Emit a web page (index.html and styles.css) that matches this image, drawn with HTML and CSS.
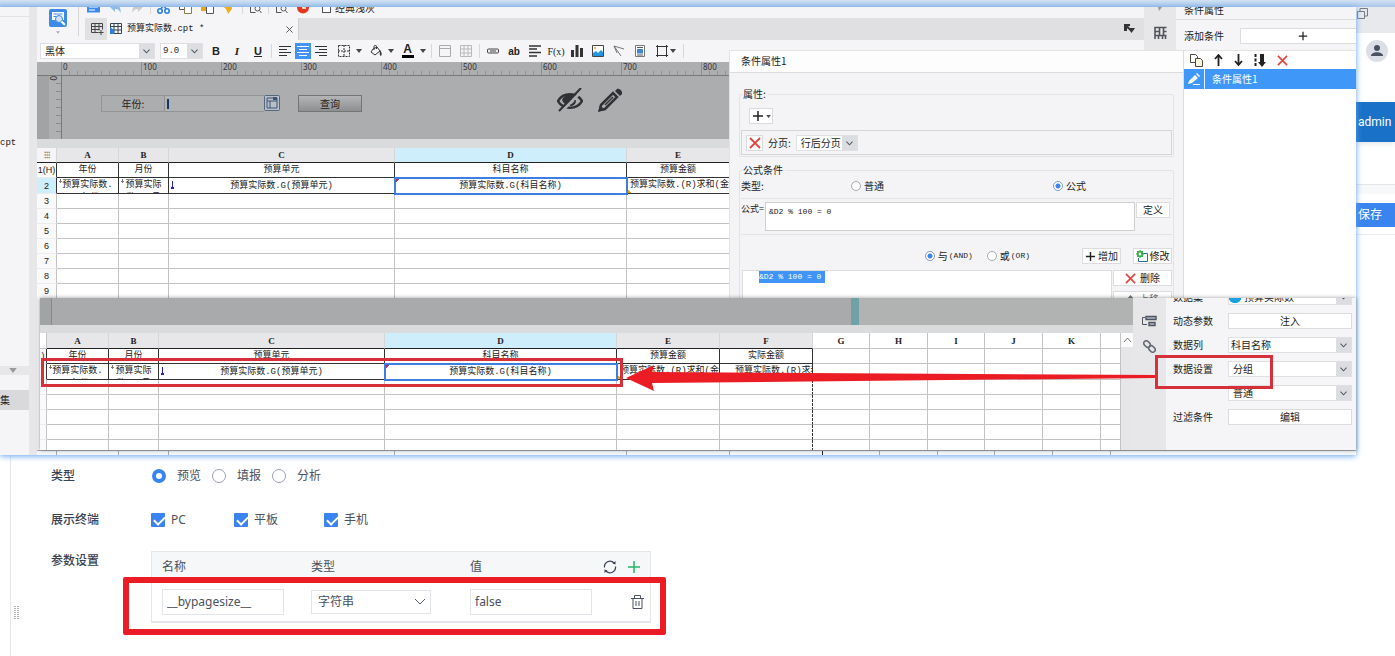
FILE: index.html
```html
<!DOCTYPE html>
<html lang="zh-CN">
<head>
<meta charset="utf-8">
<title>预算实际数.cpt</title>
<link rel="stylesheet" href="styles.css">
</head>
<body>
<svg class="sprite" aria-hidden="true">
	<symbol id="chev" viewBox="0 0 16 16"><path d="M4.500 6.500L8 10l3.500-3.500" fill="none" stroke="#55585e" stroke-width="1.200"/></symbol>
	<symbol id="cross" viewBox="0 0 12 12"><path d="M1 1l10 10M11 1L1 11" fill="none" stroke="#e2453f" stroke-width="1.800"/></symbol>
	<symbol id="plus" viewBox="0 0 12 12"><path d="M6 1v10M1 6h10" fill="none" stroke="#222" stroke-width="1.500"/></symbol>
	<symbol id="tri" viewBox="0 0 6 4"><path d="M0 0h6L3 4z" fill="#444"/></symbol>
</svg>
<div class="page">
	<div class="top">
		<div class="shot">
			<div class="tree">
				<div class="tree-top"></div>
				<div class="tree-list">cpt</div>
				<div class="tree-fold"><svg width="8" height="5" viewBox="0 0 6 4"><path d="M0 0h6L3 4z" fill="#999"/></svg></div>
				<div class="tree-gap"></div>
				<div class="tree-item">集</div>
			</div>
			<div class="windows">
				<div class="upper">
					<div class="work">
						<div class="head">
							<div class="logo">
								<svg width="18" height="18" viewBox="0 0 18 18"><rect x="0" y="0" width="18" height="18" rx="2" fill="#3d8ae8"/><path d="M3 3h12v8H3z" fill="#fff"/><path d="M4.500 5h9M4.500 7.500h3" stroke="#3d8ae8"/><circle cx="10" cy="10" r="3.500" fill="#cfe3fb" stroke="#3d8ae8"/><path d="M12.500 12.500l3.500 3.500" stroke="#fff" stroke-width="2"/></svg>
								<svg width="4" height="3" viewBox="0 0 6 4"><path d="M0 0h6L3 4z" fill="#aaa"/></svg>
							</div>
							<div class="head-main">
								<div class="quick">
									<svg class="i13" viewBox="0 0 13 13"><path d="M0 0h13v11.500H0z" fill="#3d8ae8"/><path d="M2 6h9M2 9h6" stroke="#fff"/></svg>
									<svg class="i13" viewBox="0 0 13 13"><path d="M1 6l5-5v3c5 0 6 4 5.500 8C10 8.500 9 8 6 8v3z" fill="#8fb9ea"/></svg>
									<svg class="i13" viewBox="0 0 13 13"><path d="M12 6L7 1v3C2 4 1 8 1.500 12 3 8.500 4 8 7 8v3z" fill="#c9cbcf"/></svg>
									<i class="sep"></i>
									<svg class="i13" viewBox="0 0 13 13" fill="none" stroke="#2f7de0" stroke-width="1.600"><circle cx="3" cy="10" r="2.200"/><circle cx="10" cy="10" r="2.200"/><path d="M4 8l5-8M9 8L4 0"/></svg>
									<svg class="i13" viewBox="0 0 13 13" fill="#fff" stroke="#555"><path d="M.5.5h7v8h-7z"/><path d="M5.500 4.500h7v8h-7z" stroke="#8c7a4d"/></svg>
									<svg class="i13" viewBox="0 0 13 13"><path d="M0 0h9v10H0z" fill="#e8a51c"/><path d="M5.500 4.500h7v8h-7z" fill="#fff" stroke="#555"/></svg>
									<svg class="i13" viewBox="0 0 13 13"><path d="M0 3l8-3 1 8-4 5c-1-4-3-7-5-7z" fill="#eeac20"/></svg>
									<i class="sep"></i>
									<svg class="i13" viewBox="0 0 13 13" fill="none" stroke="#555"><path d="M1.500 0v11.500h5M9.500 0v3"/><circle cx="8.500" cy="7.500" r="2.500"/><path d="M10.500 9.500l2 2.500"/></svg>
									<i class="sep"></i>
									<svg class="i13" viewBox="0 0 13 13" fill="none" stroke="#555"><path d="M1.500 0v11.500h5M9.500 0v3"/><circle cx="8.500" cy="7.500" r="2.500"/><path d="M10.500 9.500l2 2.500"/></svg>
									<svg class="i13" viewBox="0 0 13 13"><circle cx="6" cy="6.500" r="6" fill="#e03a20"/><path d="M6 3v4h3" fill="none" stroke="#fff" stroke-width="1.500"/></svg>
									<label class="classic"><input type="checkbox">经典浅灰</label>
								</div>
								<div class="tabs">
									<button class="new-tab" aria-label="新建"><svg width="13" height="12" viewBox="0 0 13 12"><path d="M.5.5h11v6M.5.5v9h7M.5 3.500h11M.5 6.500h8M4 .5v9M8 .5v7" fill="none" stroke="#444"/><path d="M10 7v5M7.500 9.500h5" stroke="#444"/></svg></button>
									<div class="tab">
										<svg width="12" height="12" viewBox="0 0 12 12"><path d="M.5.5h11v10H.5zM.5 3.500h11M.5 7h11M4 .5v10M8 .5v10" fill="none" stroke="#345"/><path d="M0 4l4 3v4H0z" fill="#2f7de0"/></svg>
										<span>预算实际数.cpt *</span>
										<button aria-label="关闭"><svg width="7" height="7" viewBox="0 0 8 8"><path d="M.5.5l7 7M7.500.5l-7 7" stroke="#444"/></svg></button>
									</div>
								</div>
							</div>
						</div>
						<div class="format">
							<span class="combo font-name"><select aria-label="字体"><option>黑体</option></select><svg><use href="#chev"/></svg></span>
							<span class="combo font-size"><select aria-label="字号"><option>9.0</option></select><svg><use href="#chev"/></svg></span>
							<button class="b">B</button>
							<button class="i">I</button>
							<button class="u">U</button>
							<i class="sep"></i>
							<div class="aligns">
								<button aria-label="左对齐"><svg class="i12" viewBox="0 0 12 12"><path d="M0 1.500h12M0 4.500h8M0 7.500h12M0 10.500h8" stroke="#333" stroke-width="1.200"/></svg></button>
								<button class="on" aria-label="居中"><svg class="i12" viewBox="0 0 12 12"><path d="M0 1.500h12M2 4.500h8M0 7.500h12M2 10.500h8" stroke="#fff" stroke-width="1.200"/></svg></button>
								<button aria-label="右对齐"><svg class="i12" viewBox="0 0 12 12"><path d="M0 1.500h12M4 4.500h8M0 7.500h12M4 10.500h8" stroke="#333" stroke-width="1.200"/></svg></button>
							</div>
							<div class="drops">
								<button aria-label="边框"><svg class="i12" viewBox="0 0 12 12"><path d="M.5.5h11v11H.5zM6 0v12M0 6h12" fill="none" stroke="#333" stroke-dasharray="2 1"/></svg><svg class="car"><use href="#tri"/></svg></button>
								<button aria-label="填充"><svg class="i12" viewBox="0 0 12 12"><path d="M3 4l4-2 3 4-5 4-4-3zM4 5V1.500C4 0 6.500 0 6.500 1.500V4" fill="none" stroke="#333"/><path d="M10 5c2 2 2 5 1 6-2-1-1-3-1-6z" fill="#333"/></svg><svg class="car"><use href="#tri"/></svg></button>
								<button class="color"><span>A</span><svg class="car"><use href="#tri"/></svg></button>
							</div>
							<i class="sep"></i>
							<button aria-label="合并"><svg class="i12" viewBox="0 0 12 12"><path d="M.5.5h11v11H.5zM0 3.500h12" fill="none" stroke="#aaa"/></svg></button>
							<button aria-label="拆分"><svg class="i12 pale" viewBox="0 0 12 12"><path d="M.5.5h11v11H.5zM.5 4h11M.5 8h11M4 .5v11M8 .5v11" fill="none" stroke="#aaa"/></svg></button>
							<i class="sep"></i>
							<button aria-label="控件"><svg class="i12" viewBox="0 0 12 12"><rect x=".5" y="4" width="11" height="4" rx="1" fill="#eee" stroke="#444"/><path d="M3 6h6" stroke="#444"/></svg></button>
							<button class="ab">ab</button>
							<button aria-label="富文本"><svg class="i12" viewBox="0 0 12 12"><path d="M0 1h12M0 4h8M0 7.500h12M0 11h8" stroke="#333" stroke-width="1.500"/></svg></button>
							<button class="fx">F(x)</button>
							<button aria-label="图表"><svg class="i12" viewBox="0 0 12 12"><path d="M0 5h3v7H0zM4.500 0h3v12h-3zM9 3h3v9H9z" fill="#333"/></svg></button>
							<button aria-label="图片"><svg class="i12" viewBox="0 0 12 12"><path d="M.5.5h11v11H.5z" fill="#fff" stroke="#444"/><path d="M1 11V8l3-2 2 2 3-3 2 2v4z" fill="#2497e3"/><circle cx="3" cy="3" r="1" fill="#f0a020"/></svg></button>
							<button aria-label="斜线"><svg class="i12" viewBox="0 0 12 12"><path d="M1 1l10 3M1 1l7 10M1 1l3 7" fill="none" stroke="#777"/></svg></button>
							<button aria-label="子报表"><svg class="i12" viewBox="0 0 12 12"><path d="M1.500.5h9v11h-9z" fill="#fff" stroke="#777"/><path d="M3 2.500h6M3 10h6" stroke="#555"/><path d="M3 4h6v4.500H3z" fill="#3f86cf"/></svg></button>
							<button class="box-drop" aria-label="框"><svg class="i12" viewBox="0 0 12 12"><path d="M1.500 0v12M10.500 0v12M0 1.500h12M0 10.500h12" stroke="#333"/></svg><svg class="car"><use href="#tri"/></svg></button>
							<i class="sep"></i>
						</div>
						<div class="ruler"><span>0</span><span>100</span><span>200</span><span>300</span><span>400</span><span>500</span><span>600</span><span>700</span><span>800</span></div>
						<div class="param">
							<div class="side-rule"><span>0</span></div>
							<div class="param-body">
								<div class="param-field">
									<label for="year">年份:</label>
									<input id="year" type="text">
									<svg width="16" height="16" viewBox="0 0 16 16"><rect x=".5" y=".5" width="15" height="15" rx="1" fill="#b9bfc8" stroke="#55677e"/><path d="M3 3h10v10H3zM3 6h10M6 6v7" fill="none" stroke="#3d5472"/><path d="M9 2h4v3H9z" fill="#3d5472"/></svg>
								</div>
								<button class="query">查询</button>
								<svg class="eye" width="26" height="24" viewBox="0 0 26 24"><path d="M1 13C6 4 20 4 25 13 20 22 6 22 1 13z" fill="none" stroke="#2f3134" stroke-width="2.500"/><path d="M5 12C8 5 16 5 18 8l-8 9c-3-1-4-3-5-5z" fill="#2f3134"/><path d="M13 17c3 0 5-2 5-5" fill="none" stroke="#2f3134" stroke-width="2"/><path d="M4 24L26 2" stroke="#acadaf" stroke-width="3"/><path d="M2 23L24 0" stroke="#2f3134" stroke-width="2"/></svg>
								<svg class="pencil" width="25" height="24" viewBox="0 0 25 24"><path d="M3 17L15 5l4 4L7 21l-5 1z" fill="none" stroke="#2f3134" stroke-width="2.500"/><path d="M17 3l2-2c2-1 6 2 5 5l-2 2zM0 24l2-7 5 5z" fill="#2f3134"/><path d="M7 17L15 9" stroke="#2f3134" stroke-width="1.500"/></svg>
							</div>
						</div>
						<div class="splitter"></div>
						<table class="sheet">
							<colgroup><col class="w20"><col class="w62"><col class="w50"><col class="w226"><col class="w232"><col class="w103"></colgroup>
							<thead>
								<tr><th class="corner">⁝⁝⁝</th><th>A</th><th>B</th><th>C</th><th class="sel">D</th><th>E</th></tr>
							</thead>
							<tbody>
								<tr class="dark"><th>1(H)</th><td>年份</td><td>月份</td><td>预算单元</td><td>科目名称</td><td>预算金额</td></tr>
								<tr class="dark bound"><th class="sel">2</th><td class="down"><div>预算实际数.G(年份)</div></td><td class="down"><div>预算实际数.G(月份)</div></td><td class="down blue">预算实际数.G(预算单元)</td><td class="picked">预算实际数.G(科目名称)</td><td class="cut">预算实际数.(R)求和(金额)</td></tr>
								<tr><th>3</th><td></td><td></td><td></td><td></td><td></td></tr>
								<tr><th>4</th><td></td><td></td><td></td><td></td><td></td></tr>
								<tr><th>5</th><td></td><td></td><td></td><td></td><td></td></tr>
								<tr><th>6</th><td></td><td></td><td></td><td></td><td></td></tr>
								<tr><th>7</th><td></td><td></td><td></td><td></td><td></td></tr>
								<tr><th>8</th><td></td><td></td><td></td><td></td><td></td></tr>
								<tr><th>9</th><td></td><td></td><td></td><td></td><td></td></tr>
							</tbody>
						</table>
					</div>
					<div class="right">
						<div class="right-head">
							<div class="bars">
								<div class="bar1"></div>
								<div class="bar2"><svg width="11" height="10" viewBox="0 0 11 10"><path d="M0 0h6v2L3 3v4H0z" fill="#333"/><path d="M4 4h7L7.500 9z" fill="#333"/><path d="M3 3l4 3" stroke="#333" stroke-width="2"/></svg></div>
							</div>
							<div class="strip"><svg width="4" height="4" viewBox="0 0 4 4"><path d="M0 0h4L1 4z" fill="#999"/></svg><svg width="14" height="14" viewBox="0 0 14 14"><path d="M2 13V1.500h11.500M2 9.500h11.500M5.500 9v4M9.500 9v4M2 5.500h4M6.500 1v8M12.500 9v4M10 5.500h3.500M10.500 1v8" fill="none" stroke="#50545c" stroke-width="1.600"/></svg></div>
							<div class="cond-head">
								<div class="cond-title">条件属性</div>
								<div class="cond-add"><span>添加条件</span><button aria-label="添加"><svg width="10" height="10"><use href="#plus"/></svg></button></div>
							</div>
						</div>
						<div class="right-body">
							<div class="dialog">
								<div class="dialog-title">条件属性1</div>
								<div class="dialog-body">
									<fieldset>
										<legend>属性:</legend>
										<button class="add-attr" aria-label="添加属性"><svg width="12" height="12"><use href="#plus"/></svg><svg width="5" height="3"><use href="#tri"/></svg></button>
										<div class="attr-row">
											<button class="btn sq" aria-label="删除"><svg width="12" height="12"><use href="#cross"/></svg></button>
											<label for="paging">分页:</label>
											<span class="combo paging"><select id="paging"><option>行后分页</option></select><svg><use href="#chev"/></svg></span>
										</div>
									</fieldset>
									<fieldset>
										<legend>公式条件</legend>
										<div class="type-row">
											<span>类型:</span>
											<label><input type="radio" name="kind">普通</label>
											<label><input type="radio" name="kind" checked>公式</label>
										</div>
										<div class="formula-row">
											<label for="formula">公式=</label>
											<textarea id="formula">&amp;D2 % 100 = 0</textarea>
											<button class="btn define">定义</button>
										</div>
										<div class="join-row">
											<label><input type="radio" name="join" checked>与<small>(AND)</small></label>
											<label><input type="radio" name="join">或<small>(OR)</small></label>
											<button class="btn"><svg width="11" height="11"><use href="#plus"/></svg>增加</button>
											<button class="btn"><svg width="12" height="12" viewBox="0 0 12 12"><path d="M5 3.500h6.500v8h-9V8" fill="#fff" stroke="#2a6f9e"/><circle cx="4" cy="4" r="2.500" fill="none" stroke="#31b04a" stroke-width="1.500"/><path d="M4 0v8M0 4h8M1 1l6 6M7 1L1 7" stroke="#31b04a"/><circle cx="4" cy="4" r="1.200" fill="#fff"/></svg>修改</button>
										</div>
										<div class="result">
											<div class="result-list"><mark>&amp;D2 % 100 = 0</mark></div>
											<div class="result-ops">
												<button class="btn"><svg width="11" height="11"><use href="#cross"/></svg>删除</button>
												<button class="btn dim"><svg width="9" height="9" viewBox="0 0 9 9"><path d="M4.500 0L9 5H6v4H3V5H0z" fill="#777"/></svg>上移</button>
											</div>
										</div>
									</fieldset>
								</div>
							</div>
							<div class="cond-list">
								<div class="cond-tools">
									<svg width="13" height="13" viewBox="0 0 13 13" fill="#fff" stroke="#4d4a3c"><path d="M.5.5h5l2 2v6h-7z"/><path d="M5.500 4.500h5l2 2v6h-7z" fill="#fbf6df"/></svg>
									<svg width="9" height="12" viewBox="0 0 9 12"><path d="M4.500 12V2M1 5l3.500-4L8 5" fill="none" stroke="#222" stroke-width="1.800"/></svg>
									<svg width="9" height="12" viewBox="0 0 9 12"><path d="M4.500 0v10M1 7l3.500 4L8 7" fill="none" stroke="#222" stroke-width="1.800"/></svg>
									<svg width="12" height="13" viewBox="0 0 12 13"><path d="M6 0h4v8h2l-4 5-4-5h2z" fill="#222"/><path d="M1.500 0v12" stroke="#222" stroke-width="2" stroke-dasharray="3 1.500"/></svg>
									<svg width="11" height="11"><use href="#cross"/></svg>
								</div>
								<div class="cond-item"><span class="pen"><svg width="12" height="12" viewBox="0 0 12 12"><path d="M1 8l6-6 3 3-6 5-4 1zM8 1l1-1 3 3-1 1z" fill="#fff"/><path d="M5 11.500h7" stroke="#fff"/></svg></span><span>条件属性1</span></div>
							</div>
						</div>
					</div>
				</div>
				<div class="lower">
					<div class="lower-sheet">
						<div class="band"><i class="band-rule"></i><i class="band-left"></i><i class="band-mark"></i></div>
						<div class="splitter"></div>
						<div class="sheet-wrap">
							<table class="sheet">
								<colgroup><col class="w7"><col class="w62"><col class="w50"><col class="w226"><col class="w232"><col class="w103"><col class="w93"><col class="w57"><col class="w58"><col class="w57"><col class="w58"><col class="w58"><col class="w20"></colgroup>
								<thead>
									<tr><th class="off"></th><th>A</th><th>B</th><th>C</th><th class="sel">D</th><th>E</th><th>F</th><th class="off">G</th><th class="off">H</th><th class="off">I</th><th class="off">J</th><th class="off">K</th><th class="off"></th></tr>
								</thead>
								<tbody>
									<tr class="dark"><th>)</th><td>年份</td><td>月份</td><td>预算单元</td><td>科目名称</td><td>预算金额</td><td>实际金额</td><td></td><td></td><td></td><td></td><td></td><td></td></tr>
									<tr class="dark bound"><th></th><td class="down"><div>预算实际数.G(年份)</div></td><td class="down"><div>预算实际数.G(月份)</div></td><td class="down blue">预算实际数.G(预算单元)</td><td class="picked">预算实际数.G(科目名称)</td><td class="cut">预算实际数.(R)求和(金额)</td><td class="cut far">预算实际数.(R)求和(金额)</td><td></td><td></td><td></td><td></td><td></td><td></td></tr>
									<tr><th></th><td></td><td></td><td></td><td></td><td></td><td></td><td></td><td></td><td></td><td></td><td></td><td></td></tr>
									<tr><th></th><td></td><td></td><td></td><td></td><td></td><td></td><td></td><td></td><td></td><td></td><td></td><td></td></tr>
									<tr><th></th><td></td><td></td><td></td><td></td><td></td><td></td><td></td><td></td><td></td><td></td><td></td><td></td></tr>
									<tr><th></th><td></td><td></td><td></td><td></td><td></td><td></td><td></td><td></td><td></td><td></td><td></td><td></td></tr>
									<tr><th></th><td></td><td></td><td></td><td></td><td></td><td></td><td></td><td></td><td></td><td></td><td></td><td></td></tr>
								</tbody>
							</table>
							<div class="scroll"><svg width="9" height="6" viewBox="0 0 9 6"><path d="M1 5l3.500-4L8 5" fill="none" stroke="#777"/></svg></div>
						</div>
					</div>
					<div class="side-icons">
						<svg width="15" height="12" viewBox="0 0 15 12"><path d="M4 1.500h10v3H4zM7 7.500h6v3H7z" fill="#a9b7cc" stroke="#50545c" stroke-width="1.400"/><path d="M3 2.500H.5v7H5" fill="none" stroke="#50545c"/></svg>
						<svg width="13" height="13" viewBox="0 0 13 13" fill="none" stroke="#666b73" stroke-width="1.600"><rect x="-3.500" y="-2.500" width="7" height="5" rx="2.500" transform="translate(4 4) rotate(45)"/><rect x="-3.500" y="-2.500" width="7" height="5" rx="2.500" transform="translate(9 9) rotate(45)"/></svg>
					</div>
					<div class="props">
						<div class="prop"><label for="dataset">数据集</label><span class="combo db"><select id="dataset"><option>预算实际数</option></select><svg><use href="#chev"/></svg></span></div>
						<div class="prop"><span>动态参数</span><button class="btn">注入</button></div>
						<div class="prop"><label for="column">数据列</label><span class="combo flush"><select id="column"><option>科目名称</option></select><svg><use href="#chev"/></svg></span></div>
						<div class="prop"><label for="setting">数据设置</label><span class="combo"><select id="setting"><option>分组</option></select><svg><use href="#chev"/></svg></span></div>
						<div class="prop"><span></span><span class="combo"><select aria-label="分组方式"><option>普通</option></select><svg><use href="#chev"/></svg></span></div>
						<div class="prop"><span>过滤条件</span><button class="btn">编辑</button></div>
					</div>
					<div class="mark-row"></div>
					<svg class="arrow" viewBox="0 0 530 26" preserveAspectRatio="none"><path d="M0 13L28 0 26 7 530 10v3L26 18l2 8z" fill="#ec1c24"/></svg>
					<div class="mark-setting"></div>
				</div>
				<div class="ticks"><i class="w20"></i><i class="w62"></i><i class="w50"></i><i class="w226"></i><i class="w232"></i><i class="w103"></i><i class="w93 edge"></i><i class="w57"></i><i class="w58"></i><i class="w57"></i><i class="w58"></i><i class="w58"></i></div>
			</div>
		</div>
		<div class="site">
			<div class="site-bar"><svg width="11" height="11" viewBox="0 0 11 11" fill="none" stroke="#777b84"><path d="M.5 3.500h7v7h-7z"/><path d="M3 3V.5h7.500V8H8"/></svg></div>
			<div class="site-user"><svg width="22" height="22" viewBox="0 0 22 22"><circle cx="11" cy="11" r="11" fill="#dcdfe6"/><circle cx="11" cy="8" r="3" fill="#4a5262"/><path d="M5 16c0-5 12-5 12 0z" fill="#4a5262"/></svg></div>
			<div class="site-name">admin</div>
			<div class="site-blank"></div>
			<div class="site-line"></div>
			<div class="site-save"><button>保存</button></div>
		</div>
	</div>
	<div class="form">
		<div class="grip"><svg width="5" height="13" viewBox="0 0 5 13"><path d="M1 0v13M4 0v13" stroke="#666" stroke-dasharray="1 1"/></svg></div>
		<div class="fields">
			<div class="field">
				<span class="name">类型</span>
				<label class="opt"><input type="radio" name="mode" checked>预览</label>
				<label class="opt"><input type="radio" name="mode">填报</label>
				<label class="opt"><input type="radio" name="mode">分析</label>
			</div>
			<div class="field">
				<span class="name">展示终端</span>
				<label class="chk pc"><input type="checkbox" checked>PC</label>
				<label class="chk"><input type="checkbox" checked>平板</label>
				<label class="chk"><input type="checkbox" checked>手机</label>
			</div>
			<div class="field last">
				<span class="name">参数设置</span>
				<div class="params">
					<table>
						<thead>
							<tr><th class="c1">名称</th><th class="c2">类型</th><th class="c3">值</th><th class="c4"><div class="acts">
								<button aria-label="刷新"><svg width="14" height="14" viewBox="0 0 14 14"><path d="M1.500 7.500A5.500 5.500 0 0 1 11 3M12.500 6.500A5.500 5.500 0 0 1 3 11" fill="none" stroke="#3b4354" stroke-width="1.200"/><path d="M9.500 3.500L12.500 1v3.500zM4.500 10.500L1.500 13V9.500z" fill="#3b4354"/></svg></button>
								<button aria-label="新增"><svg width="12" height="12" viewBox="0 0 12 12"><path d="M6 0v12M0 6h12" stroke="#27b768" stroke-width="1.500"/></svg></button>
							</div></th></tr>
						</thead>
						<tbody>
							<tr>
								<td><input type="text" aria-label="名称" value="__bypagesize__"></td>
								<td><span class="pick"><select aria-label="类型"><option>字符串</option></select><svg width="12" height="8" viewBox="0 0 12 8"><path d="M1 1l5 5 5-5" fill="none" stroke="#555c69"/></svg></span></td>
								<td><input type="text" aria-label="值" value="false"></td>
								<td class="c4"><div class="acts del"><button aria-label="删除"><svg width="13" height="14" viewBox="0 0 13 14" fill="none" stroke="#4a5160"><path d="M0 3.500h13M3.500 3V.5h6V3M2 4v9.500h9V4M5 6v5M8 6v5"/></svg></button></div></td>
							</tr>
						</tbody>
					</table>
					<div class="mark-param"></div>
				</div>
			</div>
		</div>
	</div>
</div>
</body>
</html>
```
FILE: styles.css
```css
*{
	padding: 0;
	margin: 0;
	box-sizing: border-box;
}
body{
	background: #fff;
	color: #222;
	font: 10px/14px "Noto Sans CJK SC", sans-serif;
	overflow: hidden;
}
button,input,select,textarea{
	font: inherit;
	color: inherit;
	border: 0;
	background: none;
	outline: none;
	appearance: none;
}
svg{
	display: block;
	flex: none;
}
table{
	table-layout: fixed;
	border-spacing: 0;
}
fieldset{
	border: 1px solid #e3e3e6;
	border-radius: 2px;
	min-width: 0;
}
.sprite{
	position: absolute;
	width: 0;
	height: 0;
}
.page{
	display: flex;
	flex-direction: column;
	min-height: 100vh;
}
.top{
	display: grid;
	grid-template-columns: minmax(0, 1fr) 39px;
	padding-top: 7px;
	background: linear-gradient(#d3e2f3, #a9c5e8 7px, #fff 7px);
}
/*设计器截图*/
.shot{
	z-index: 1;
	display: flex;
	height: 448px;
	background: #f5f5f7;
	box-shadow: 0 1px 6px #5fa3ee;
}
.tree{
	display: flex;
	flex-direction: column;
	flex: 0 0 37px;
	border-right: 8px solid #e7e7ea;
	background: #f5f5f7;
}
.tree-top{
	height: 10px;
	border-bottom: 1px solid #e2e2e4;
}
.tree-list{
	height: 349px;
	padding-top: 119px;
	font-size: 9px;
	font-family: "Liberation Mono", monospace;
}
.tree-fold{
	display: flex;
	align-items: center;
	height: 9px;
	padding-left: 9px;
	background: #e7e7ea;
}
.tree-gap{
	height: 15px;
}
.tree-item{
	height: 20px;
	line-height: 20px;
	background: #d9d9dc;
}
.windows{
	flex: 1;
	min-width: 0;
}
.upper{
	display: flex;
	height: 291px;
	overflow: hidden;
}
.work{
	flex: 1;
	min-width: 0;
	overflow: hidden;
}
.head{
	display: flex;
	height: 33px;
	background: #f5f5f7;
}
.logo{
	display: flex;
	flex-direction: column;
	align-items: center;
	gap: 4px;
	width: 42px;
	margin-right: 6px;
	height: 29px;
	padding-top: 2px;
	border-right: 1px solid #d5d5d8;
}
.head-main{
	flex: 1;
	min-width: 0;
}
.quick{
	display: flex;
	align-items: flex-end;
	gap: 9px;
	height: 11px;
	padding: 0 0 4px 2px;
	overflow: hidden;
}
.sep{
	flex: none;
	width: 1px;
	height: 14px;
	background: #d8d8da;
}
.quick .sep{
	margin: 0 -3px;
}
.i13{
	width: 13px;
	height: 13px;
}
.i12{
	width: 12px;
	height: 12px;
}
.classic{
	display: flex;
	align-items: center;
	gap: 4px;
	margin-left: 3px;
	white-space: nowrap;
	line-height: 12px;
}
.classic input{
	width: 9px;
	height: 9px;
	border: 1px solid #555;
	background: #fff;
}
.tabs{
	display: flex;
	height: 22px;
	background: #e0e0e2;
}
.new-tab{
	width: 22px;
	padding-left: 6px;
}
.tab{
	display: flex;
	align-items: center;
	gap: 5px;
	width: 192px;
	padding: 0 5px 0 3px;
	font: 9px/16px "Liberation Mono", "Noto Sans CJK SC", monospace;
	background: #f5f5f7;
	border-right: 1px solid #cfcfd2;
}
.tab button{
	margin-left: auto;
}
.format{
	display: flex;
	align-items: center;
	gap: 5px;
	height: 22px;
	padding-left: 3px;
	background: #f5f5f7;
}
.format button{
	display: flex;
	align-items: center;
	justify-content: center;
	flex: none;
	width: 16px;
	height: 16px;
}
.combo{
	display: flex;
	flex: none;
	height: 16px;
	border: 1px solid #e0e0e3;
	background: #fff;
}
.combo select{
	flex: 1;
	min-width: 0;
	padding-left: 4px;
	line-height: 14px;
}
.combo svg{
	width: 15px;
	height: 14px;
	background: #dcdde0;
}
.font-name{
	width: 115px;
}
.font-size{
	width: 43px;
	font: 9px "Liberation Mono", monospace;
}
.font-size select{
	padding-left: 2px;
}
.b,.i,.u{
	font: bold 11px "Liberation Sans", sans-serif;
}
.i{
	font-style: italic;
	font-family: "Liberation Serif", serif;
}
.u{
	text-decoration: underline;
}
.aligns{
	display: flex;
	gap: 2px;
}
.aligns .on{
	background: #3f94f5;
}
.drops{
	display: flex;
	gap: 7px;
	padding-left: 3px;
}
.format .drops button,
.format .box-drop{
	width: 25px;
	gap: 6px;
}
.format .box-drop{
	gap: 2px;
}
.car{
	width: 6px;
	height: 4px;
}
.color span{
	width: 12px;
	height: 14px;
	font: bold 12px/11px "Liberation Sans", sans-serif;
	border-bottom: 3px solid #000;
}
.pale{
	opacity: .8;
}
.format .ab{
	font: bold 10px "Liberation Sans", sans-serif;
}
.format .fx{
	font: 10px "Liberation Serif", serif;
}
.ruler{
	display: flex;
	height: 14px;
	padding-left: 24px;
	overflow: hidden;
	font: 8px/10px "Noto Sans", sans-serif;
	color: #333;
	background: #adaeb0;
	border-bottom: 1px solid #77787a;
}
.ruler span{
	flex: 0 0 80px;
	padding-left: 1px;
	border-left: 1px solid #8d8e90;
	background: repeating-linear-gradient(90deg, transparent 0 7px, #939496 7px 8px) 0 100% / 100% 4px no-repeat;
}
.param{
	display: flex;
	height: 63px;
	background: #acadaf;
}
.side-rule{
	flex: 0 0 25px;
	border-right: 1px solid #77787a;
	background: repeating-linear-gradient(transparent 0 7px, #8d8e90 7px 8px) 100% 0 / 5px 100% no-repeat, linear-gradient(90deg, #a2a3a5 12px, #afb0b2 12px);
}
.side-rule span{
	display: block;
	width: 8px;
	margin-left: 12px;
	font: 8px/8px "Noto Sans", sans-serif;
	writing-mode: vertical-rl;
}
.param-body{
	display: flex;
	align-items: flex-start;
	padding: 12px 0 0 39px;
}
.param-field{
	display: flex;
	margin: 7px 18px 0 0;
}
.param-field label{
	width: 64px;
	height: 17px;
	line-height: 15px;
	text-align: center;
	border: 1px solid #939496;
}
.param-field input{
	width: 99px;
	height: 17px;
	border: 1px solid #939496;
	border-width: 1px 0;
	background: linear-gradient(#123a66, #123a66) 2px 3px / 2px 10px no-repeat, #b1b2b4;
}
.query{
	width: 64px;
	height: 17px;
	margin: 7px 195px 0 0;
	line-height: 15px;
	border: 1px solid #747577;
	background: linear-gradient(#b4b5b7, #8e8f91);
}
.pencil{
	margin-left: 15px;
}
.splitter{
	height: 9px;
	background: #dadbdc;
}
/*表格*/
.sheet{
	width: 0;
	font: 9px/14px "Liberation Mono", "Noto Sans CJK SC", monospace;
	text-align: center;
	white-space: nowrap;
	background: #fff;
}
.w7{ width: 7px; }
.w20{ width: 20px; }
.w50{ width: 50px; }
.w57{ width: 57px; }
.w58{ width: 58px; }
.w62{ width: 62px; }
.w93{ width: 93px; }
.w103{ width: 103px; }
.w226{ width: 226px; }
.w232{ width: 232px; }
.sheet th,.sheet td{
	height: 15px;
	overflow: hidden;
	font-weight: normal;
	border-right: 1px solid #c3c3c5;
	border-bottom: 1px solid #c3c3c5;
}
.sheet tbody th{
	font-family: "Liberation Sans", sans-serif;
	background: #fafafa;
	border-bottom-color: #ececee;
}
.sheet thead th{
	background: #e7e7e9;
	border-right-color: #d6d6d8;
	border-bottom-color: #222;
	font-weight: bold;
	font-family: "Liberation Serif", serif;
}
.sheet thead .off{
	background: #fff;
	border-color: #c3c3c5;
}
.sheet thead .corner{
	background: #f5f5f7;
	color: #888;
}
.sheet .sel,
.sheet thead .sel{
	background: #cfeefb;
}
.sheet .dark td{
	border-color: #333;
}
.sheet .dark th{
	border-right-color: #333;
}
.sheet .dark td:nth-child(n+8){
	border-color: #c3c3c5;
}
.sheet .bound td,
.sheet .bound th{
	height: 16px;
}
.bound div{
	height: 14px;
	padding: 0 4px;
	line-height: 13px;
	overflow: hidden;
	white-space: normal;
	word-break: break-all;
}
.sheet .down{
	background: linear-gradient(#777, #777) 3px 1px / 1px 4px no-repeat, linear-gradient(#777, #777) 2px 3px / 3px 1px no-repeat;
}
.sheet .blue{
	background: linear-gradient(#22c, #22c) 3px 3px / 1px 8px no-repeat, linear-gradient(#22c, #22c) 2px 9px / 3px 2px no-repeat;
}
.sheet .picked{
	background: linear-gradient(135deg, #a23c6c 4px, transparent 4px);
	outline: 2px solid #3c7fe0;
	outline-offset: -1px;
}
.sheet .cut{
	padding-left: 3px;
	line-height: 13px;
	text-align: left;
	background: linear-gradient(45deg, #e8a51c 3px, transparent 3px);
}
.sheet .far{
	padding-left: 15px;
	background: none;
}
/*条件属性*/
.right{
	display: flex;
	flex-direction: column;
	flex: 0 0 627px;
}
.right-head{
	display: flex;
	height: 43px;
}
.bars{
	flex: 0 0 415px;
	background: #f5f5f7;
}
.bar1{
	height: 11px;
}
.bar2{
	display: flex;
	align-items: center;
	justify-content: flex-end;
	height: 22px;
	padding-right: 9px;
	background: #e0e0e2;
}
.strip{
	display: flex;
	flex-direction: column;
	align-items: center;
	gap: 15px;
	flex: 0 0 32px;
	background: #e7e7e9;
}
.cond-head{
	flex: 1;
	padding-left: 8px;
}
.cond-title{
	height: 13px;
	margin-left: -8px;
	padding-left: 8px;
	line-height: 5px;
	border-bottom: 1px solid #dcdcdf;
}
.cond-add{
	display: flex;
	align-items: center;
	justify-content: space-between;
	padding-top: 8px;
}
.cond-add button{
	display: flex;
	align-items: center;
	justify-content: center;
	width: 116px;
	height: 16px;
	padding-left: 8px;
	border: 1px solid #dcdcdf;
	border-right: 0;
	background: #fff;
}
.right-body{
	display: flex;
	flex: 1;
	min-height: 0;
}
.dialog{
	flex: 0 0 455px;
	border-right: 1px solid #dcdcdf;
	border-left: 1px solid #e3e3e6;
	background: #f4f4f6;
}
.dialog-title{
	height: 23px;
	padding-left: 11px;
	line-height: 20px;
	border-top: 1px solid #e3e3e6;
	border-bottom: 1px solid #dcdcdf;
	background: #fdfdfd;
}
.dialog-body{
	padding: 14px 9px 0;
}
.dialog fieldset{
	margin-bottom: 6px;
	padding: 0 1px 1px;
}
.dialog legend{
	margin-left: 2px;
	padding: 0 2px 0 0;
}
.add-attr{
	display: flex;
	align-items: center;
	justify-content: center;
	gap: 2px;
	width: 24px;
	height: 16px;
	margin: 7px 0 6px 8px;
	border: 1px solid #dcdcdf;
	background: #fff;
}
.attr-row{
	display: flex;
	align-items: center;
	gap: 5px;
	height: 25px;
	padding-left: 4px;
	border: 1px solid #d5d5d8;
}
.btn{
	display: flex;
	align-items: center;
	justify-content: center;
	gap: 4px;
	height: 16px;
	line-height: 14px;
	white-space: nowrap;
	border: 1px solid #dcdcdf;
	background: #fff;
}
.sq{
	width: 17px;
}
.paging{
	width: 62px;
}
.type-row{
	display: grid;
	grid-template-columns: 110px 202px 1fr;
	align-items: center;
	height: 22px;
	padding-bottom: 4px;
	border-bottom: 1px solid #e3e3e6;
}
.dialog label{
	display: flex;
	align-items: center;
	gap: 3px;
	white-space: nowrap;
}
.dialog input{
	width: 10px;
	height: 10px;
	border: 1px solid #aaabae;
	border-radius: 50%;
	background: #fff;
}
.dialog input:checked{
	border-color: #7d9cc4;
	background: radial-gradient(#3c86e8 2px, #fff 3px);
}
.formula-row{
	display: flex;
	align-items: flex-start;
	padding: 3px 2px 3px 0;
	border-bottom: 1px solid #e3e3e6;
}
.formula-row label{
	width: 24px;
	font-size: 9px;
}
.formula-row textarea{
	flex: 1;
	height: 29px;
	padding: 3px;
	font: 8px/12px "Liberation Mono", monospace;
	resize: none;
	border: 1px solid #cfcfd2;
	background: #fff;
}
.define{
	width: 34px;
	margin-left: 1px;
}
.join-row{
	display: flex;
	align-items: center;
	justify-content: flex-end;
	gap: 12px;
	padding: 13px 0 6px;
}
.join-row small{
	margin-left: -2px;
	font: 8px/14px "Liberation Mono", monospace;
}
.join-row label + label{
	margin: 0 40px 0 2px;
}
.join-row .btn{
	width: 39px;
	gap: 2px;
}
.result{
	display: flex;
	gap: 1px;
	height: 60px;
}
.result-list{
	flex: 1;
	margin-left: 1px;
	padding-left: 16px;
	border: 1px solid #dcdcdf;
	background: #fff;
}
.result-list mark{
	display: block;
	width: 66px;
	font: 8px/12px "Liberation Mono", monospace;
	color: #fff;
	background: #3f94f5;
}
.result-ops{
	display: flex;
	flex-direction: column;
	gap: 5px;
	flex: 0 0 59px;
}
.dim{
	color: #777;
}
.cond-list{
	flex: 1;
	background: #fff;
}
.cond-tools{
	display: flex;
	align-items: center;
	gap: 11px;
	height: 19px;
	padding-left: 6px;
	border-top: 1px solid #e3e3e6;
}
.cond-item{
	display: flex;
	align-items: center;
	gap: 7px;
	height: 20px;
	color: #fff;
	background: #3f98f8;
}
.pen{
	display: flex;
	align-items: center;
	align-self: stretch;
	width: 21px;
	padding-left: 4px;
	border-right: 1px solid #dcebfd;
}
/*下方窗口*/
.lower{
	position: relative;
	display: flex;
	height: 152px;
	margin-left: 3px;
	background: #f5f5f7;
	box-shadow: 0 0 4px rgba(0, 0, 0, .4);
}
.lower-sheet{
	flex: 1;
	min-width: 0;
}
.band{
	display: flex;
	height: 27px;
	background: #b1b2b2;
}
.band-rule{
	width: 12px;
	background: #a2a3a5;
	border-right: 1px solid #88898b;
}
.band-left{
	width: 799px;
	background: #a9aaac;
}
.band-mark{
	width: 8px;
	background: #70a0a8;
}
.lower .splitter{
	height: 8px;
}
.sheet-wrap{
	display: flex;
	height: 117px;
	overflow: hidden;
	background: #fff;
}
.sheet-wrap thead th{
	height: 16px;
}
.sheet-wrap tr:nth-child(n+3) td:nth-child(7){
	border-right: 1px dashed #333;
}
.scroll{
	display: flex;
	flex-direction: column;
	align-items: center;
	flex: 0 0 13px;
	margin-left: auto;
	padding-top: 4px;
	background: linear-gradient(#fbfbfb 14px, #e6e6e8 14px);
}
.side-icons{
	display: flex;
	flex-direction: column;
	align-items: center;
	gap: 13px;
	flex: 0 0 33px;
	padding-top: 17px;
	background: #e7e7e9;
}
.props{
	display: flex;
	flex-direction: column;
	justify-content: flex-end;
	gap: 8px;
	flex: 0 0 190px;
	padding: 0 4px 25px 7px;
	overflow: hidden;
}
.prop{
	display: grid;
	grid-template-columns: 55px 1fr;
	align-items: center;
	flex: none;
	height: 16px;
}
.flush select{
	padding-left: 2px;
}
.db{
	background: radial-gradient(6px 4px at 6px 9px, #1e9fe0 95%, transparent), #fff;
}
.db select{
	padding-left: 15px;
}
.mark-row,.mark-setting{
	position: absolute;
	border: 3px solid #d6303a;
}
.mark-row{
	top: 60px;
	left: 1px;
	width: 582px;
	height: 29px;
}
.mark-setting{
	top: 57px;
	right: 83px;
	width: 118px;
	height: 34px;
}
.arrow{
	position: absolute;
	top: 67px;
	left: 586px;
	width: calc(100% - 786px);
	height: 26px;
}
.ticks{
	display: flex;
	height: 5px;
	border-top: 1px solid #a9aaac;
	background: #f4f8fd;
}
.ticks i{
	border-right: 1px solid #a9aaac;
}
.ticks .edge{
	border-color: #222;
}
/*右侧站点*/
.site{
	font: 12px/16px "Noto Sans", "Noto Sans CJK SC", sans-serif;
	color: #fff;
}
.site-bar{
	height: 26px;
	padding: 1px;
	background: #e8e9ed;
}
.site-user{
	height: 69px;
	padding: 7px 0 0 10px;
}
.site-name{
	height: 40px;
	padding-left: 2px;
	line-height: 40px;
	font-family: Roboto, sans-serif;
	background: #1a71c8;
	box-shadow: 0 2px 6px #e3e6eb;
}
.site-blank{
	height: 42px;
}
.site-line{
	height: 10px;
	border-top: 1px solid #e4e6ea;
	background: #f7f8fa;
}
.site-save{
	padding: 9px 0 7px;
	border-bottom: 1px solid #e8eaee;
}
.site-save button{
	width: 100%;
	height: 24px;
	padding-left: 2px;
	text-align: left;
	background: #3a84f0;
}
/*表单*/
.form{
	display: flex;
	flex: 1;
	font: 12px/16px "Noto Sans", "Noto Sans CJK SC", sans-serif;
	color: #4a5160;
}
.grip{
	width: 41px;
	margin-left: 10px;
	padding: 151px 0 0 3px;
	border-left: 1px solid #e4e6ea;
}
.fields{
	flex: 1;
	padding-top: 11px;
}
.field{
	display: flex;
	align-items: center;
	height: 20px;
	margin-bottom: 24px;
}
.name{
	flex: 0 0 100px;
	font-weight: 500;
	color: #3a4252;
}
.field.last{
	align-items: flex-start;
	margin-top: -3px;
}
.last .name{
	padding-top: 2px;
}
.opt,.chk{
	display: flex;
	align-items: center;
	gap: 11px;
	width: 60px;
}
.opt input{
	width: 14px;
	height: 14px;
	margin-left: 1px;
	border: 1px solid #9aa0ab;
	border-radius: 50%;
}
.opt input:checked{
	border: 4px solid #3a84f0;
}
.chk{
	gap: 6px;
	width: 90px;
}
.pc{
	width: 83px;
}
.chk input{
	width: 14px;
	height: 14px;
	border-radius: 1px;
	background: #3a84f0;
}
.chk input::after{
	content: "";
	display: block;
	width: 9px;
	height: 5px;
	margin: 3px;
	border: solid #fff;
	border-width: 0 0 2px 2px;
	rotate: -45deg;
}
.params{
	position: relative;
	width: 500px;
}
.params table{
	width: 100%;
	border: 1px solid #e4e6ea;
	border-bottom-width: 2px;
}
.params th{
	height: 30px;
	text-align: left;
	font-weight: normal;
	padding-left: 10px;
	background: #f6f7f9;
}
.params td{
	height: 39px;
	padding-left: 10px;
}
.c1{ width: 149px; }
.c2{ width: 159px; }
.c3{ width: 132px; }
.params .c4{
	padding: 0;
}
.acts{
	display: flex;
	justify-content: flex-end;
	gap: 11px;
	padding-right: 10px;
}
.del{
	padding-right: 6px;
}
.params input,.pick{
	width: 122px;
	height: 26px;
	padding: 0 4px;
	border: 1px solid #e1e4e9;
	background: #fff;
}
.pick{
	display: flex;
	align-items: center;
	width: 120px;
	height: 24px;
	padding-left: 6px;
}
.pick select{
	flex: 1;
}
.mark-param{
	position: absolute;
	top: 26px;
	left: -28px;
	right: -15px;
	height: 58px;
	border: 6px solid #ec1c24;
	border-radius: 2px;
}
```
